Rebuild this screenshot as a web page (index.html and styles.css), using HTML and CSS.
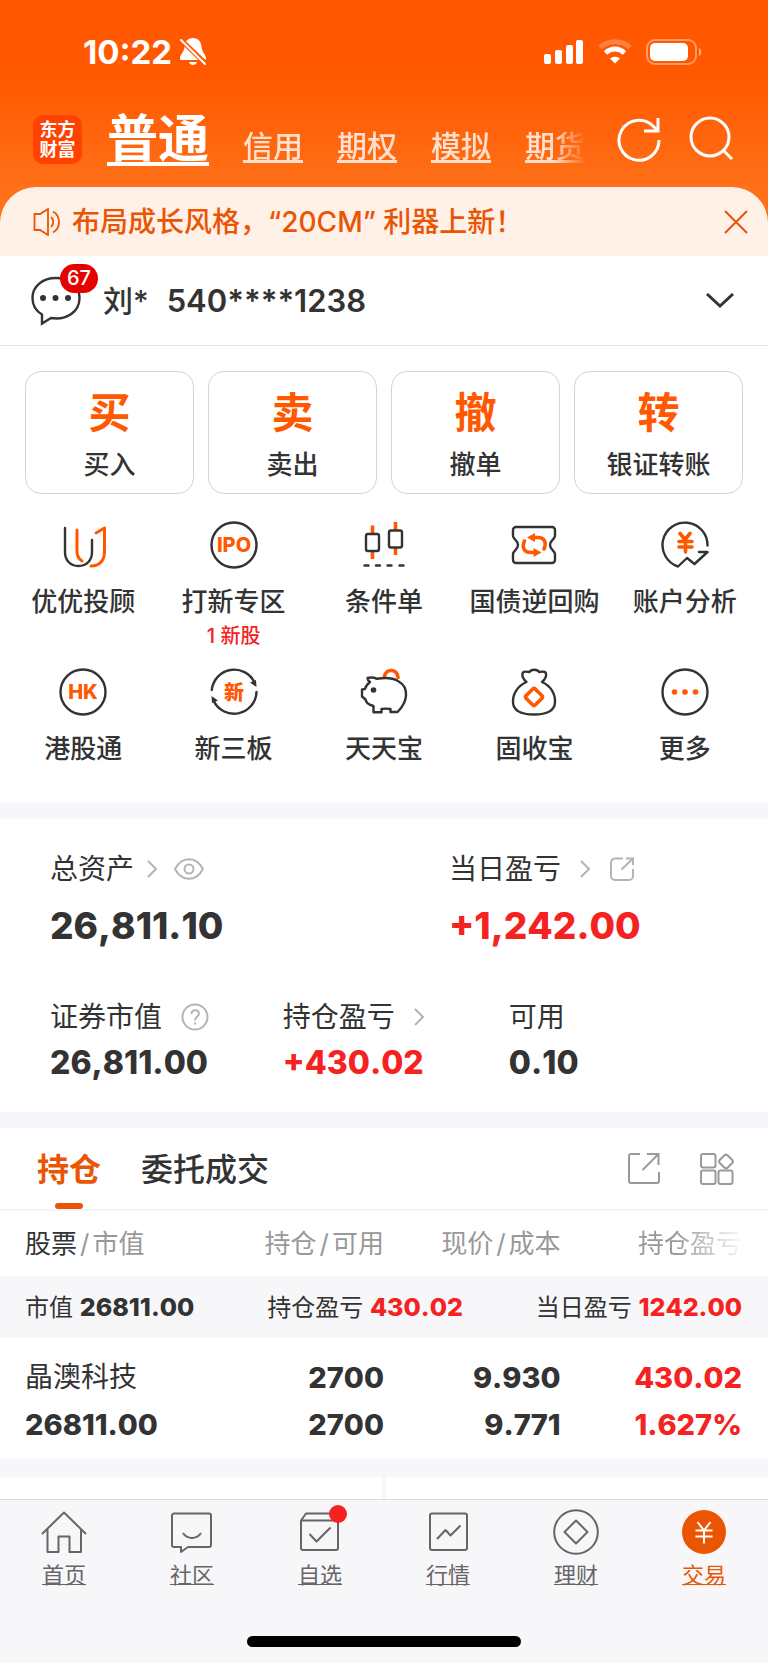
FILE: index.html
```html
<!DOCTYPE html>
<html lang="zh-CN">
<head>
  <meta charset="UTF-8">
  <meta name="viewport" content="width=device-width, initial-scale=1.0">
  <title>交易</title>
  <link rel="stylesheet" href="styles.css">
</head>
<body>

  <header class="top">
    <div class="status">
      <span class="time">10:22</span>
      <svg class="bell" width="28" height="28" viewBox="0 0 28 28">
        <path fill="#fff" d="M14 0c5.500 0 8 4 8.500 8.500C23 15 27 16 27 20.500c0 1-.6 1.500-1.500 1.500H2.500C1.600 22 1 21.500 1 20.500 1 16 5 15 5.500 8.500 6 4 8.500 0 14 0zM10 24h8c-.5 2-2 3-4 3s-3.500-1-4-3z"/>
        <path stroke="#ff5800" stroke-width="5" d="M1 1l26 25"/>
        <path stroke="#fff" stroke-width="2" stroke-linecap="round" d="M2 2l24 24"/>
      </svg>
      <div class="signals">
        <svg width="40" height="26" viewBox="0 0 40 26" fill="#fff">
          <rect x="0" y="15" width="7" height="10" rx="2"/>
          <rect x="11" y="11" width="7" height="14" rx="2"/>
          <rect x="22" y="6" width="7" height="19" rx="2"/>
          <rect x="32" y="1" width="7" height="24" rx="2"/>
        </svg>
        <svg width="34" height="26" viewBox="0 0 34 26" fill="none">
          <path stroke="#fff" stroke-opacity=".25" stroke-width="5" d="M2 8.500C10 .8 24 .8 32 8.500"/>
          <path stroke="#fff" stroke-width="5" d="M7.500 14C13 8.800 21 8.800 26.500 14"/>
          <path fill="#fff" d="M17 24.500l-5-5c3-2.500 7-2.500 10 0z"/>
        </svg>
        <svg width="56" height="26" viewBox="0 0 56 26">
          <rect x="1" y="1" width="49" height="24" rx="8" fill="none" stroke="#fff" stroke-opacity=".4" stroke-width="2"/>
          <rect x="4" y="4" width="38" height="18" rx="5" fill="#fff"/>
          <path fill="#fff" fill-opacity=".5" d="M53 9c3 1 3 7 0 8z"/>
        </svg>
      </div>
    </div>

    <div class="nav">
      <div class="logo">东方<br>财富</div>
      <nav class="markets">
        <a class="current" href="#">普通</a>
        <a href="#">信用</a>
        <a href="#">期权</a>
        <a href="#">模拟</a>
        <a href="#">期货</a>
      </nav>
      <button class="icon-btn" aria-label="刷新">
        <svg width="44" height="46" viewBox="0 0 44 46" fill="none" stroke="#fff" stroke-width="3">
          <path d="M42 24a20 20 0 1 1-6-14l5 5M41 2v13H27"/>
        </svg>
      </button>
      <button class="icon-btn search" aria-label="搜索">
        <svg width="44" height="46" viewBox="0 0 44 46" fill="none" stroke="#fff" stroke-width="3">
          <circle cx="21" cy="21" r="19"/>
          <path d="M34 34l9 9"/>
        </svg>
      </button>
    </div>
  </header>

  <div class="notice-wrap">
    <div class="notice">
      <svg width="27" height="28" viewBox="0 0 27 28" fill="none" stroke="#ea5504" stroke-width="1.800">
        <path d="M1.500 6H7l8-5v26l-8-5H1.500zM18 9c3 2.500 3 7.500 0 10M20 3.500c8 4.500 8 16.500 0 21"/>
      </svg>
      <span>布局成长风格，“20CM” 利器上新！</span>
      <button class="icon-btn close" aria-label="关闭">
        <svg width="24" height="24" viewBox="0 0 24 24" stroke="#ea5504" stroke-width="2"><path d="M1 1l22 22M23 1L1 23"/></svg>
      </button>
    </div>
  </div>

  <div class="account">
    <div class="msg">
      <svg width="50" height="50" viewBox="0 0 50 50" fill="none" stroke="#333" stroke-width="2.400">
        <path d="M25 2C11.500 2 1.500 10.500 1.500 22c0 8 3.500 13 9.500 16.500v9l9-5.500c16 2.500 28.500-6.500 28.500-20C48.500 10.500 38.500 2 25 2z"/>
        <g fill="#333" stroke="none"><circle cx="12" cy="22" r="3"/><circle cx="24.500" cy="22" r="3"/><circle cx="37" cy="22" r="3"/></g>
      </svg>
      <span class="badge">67</span>
    </div>
    <span class="owner">刘*</span>
    <span class="number">540****1238</span>
    <button class="icon-btn expand" aria-label="切换账户">
      <svg width="28" height="16" viewBox="0 0 28 16" fill="none" stroke="#333" stroke-width="3"><path d="M1 1l13 12L27 1"/></svg>
    </button>
  </div>

  <div class="actions">
    <button><b>买</b><span>买入</span></button>
    <button><b>卖</b><span>卖出</span></button>
    <button><b>撤</b><span>撤单</span></button>
    <button><b>转</b><span>银证转账</span></button>
  </div>

  <div class="tools">
    <button>
      <svg width="48" height="48" viewBox="0 0 48 48">
        <path class="ink" d="M6 7V31C6 39 11 45 19.500 45S33 39 33 31V19"/>
        <path class="hot thin" d="M18 9V31C18 36 20 38 23 40M37 12L45.500 7V31C45.500 40 40 45 32 45"/>
      </svg>
      <span>优优投顾</span>
    </button>
    <button>
      <svg width="48" height="48" viewBox="0 0 48 48">
        <circle class="ink" cx="24" cy="24" r="22.500"/>
        <text class="word" x="24" y="31">IPO</text>
      </svg>
      <span>打新专区</span>
      <small>1 新股</small>
    </button>
    <button>
      <svg width="48" height="48" viewBox="0 0 48 48">
        <path class="hot flat" d="M12.500 4.500V12M12.500 30v8M35.500 1v8M35.500 26v8"/>
        <rect class="ink" x="6" y="13" width="13" height="17" rx="2"/>
        <rect class="ink" x="29" y="9.500" width="13" height="17" rx="2"/>
        <path class="ink" d="M4.500 44.500h4M16 44.500h4M27.500 44.500h4M39.500 44.500h4"/>
      </svg>
      <span>条件单</span>
    </button>
    <button>
      <svg width="48" height="48" viewBox="0 0 48 48">
        <path class="ink" d="M6 6H42a3 3 0 0 1 3 3v6c0 3-5 4-5 9s5 6 5 9v6a3 3 0 0 1-3 3H6a3 3 0 0 1-3-3v-6c0-3 5-4 5-9s-5-6-5-9V9a3 3 0 0 1 3-3z"/>
        <path class="hot" d="M34 28C37 21 34 16.500 28 16.500H24M14.500 20C11.500 27 14.500 31.500 20.500 31.500H25"/>
        <path fill="#ff5800" d="M17 16.500l8-4.500v9zM31.500 31.500l-8-4.500v9z"/>
      </svg>
      <span>国债逆回购</span>
    </button>
    <button>
      <svg width="48" height="48" viewBox="0 0 48 48">
        <path class="ink" d="M46.500 24.500A22.500 22.500 0 1 0 17 45.500L26 37l7.500 6L46.500 31H38"/>
        <path class="hot" d="M19 12.500l5 6 5-6M18 20.500h13M18 26h13M24.500 19v12"/>
      </svg>
      <span>账户分析</span>
    </button>
    <button>
      <svg width="48" height="48" viewBox="0 0 48 48">
        <circle class="ink" cx="24" cy="24" r="22.500"/>
        <text class="word" x="24" y="31">HK</text>
      </svg>
      <span>港股通</span>
    </button>
    <button>
      <svg width="48" height="48" viewBox="0 0 48 48">
        <path class="ink" d="M1.800 22A22.500 22.500 0 0 1 44.500 14.500M46.500 24A22.500 22.500 0 0 1 3.500 32.500"/>
        <path fill="#333" d="M40 14.500l6-2.500.5 7zM8 32.500L2 35 1.500 28z"/>
        <text class="word" x="24" y="32">新</text>
      </svg>
      <span>新三板</span>
    </button>
    <button>
      <svg width="48" height="48" viewBox="0 0 48 48">
        <path class="hot" d="M24.500 8C27 0 37 1 38 9.500"/>
        <path class="ink" d="M7.500 10C11 9.200 14 9.500 17 10.800 24 9.500 33 10 38 13c5 2.800 8.500 8 8 14.500-.3 6-4 12-8.500 16.500h-7v-3c-3-.5-6-.5-9 0v3.300h-8V38C9 37 6 35 5.500 31.500L2 28.500V21.500L5 21c.7-3 2.500-5 5-7-1.500-1-2.500-2-2.500-4z"/>
        <circle fill="#333" cx="13.500" cy="22" r="2.800"/>
      </svg>
      <span>天天宝</span>
    </button>
    <button>
      <svg width="48" height="48" viewBox="0 0 48 48">
        <path class="ink" d="M16.500 14C13.500 11.500 12 8.500 12.500 5.500 13 3 17 3.500 19.500 4c1.500-3 8-3 9.500 0 2.500-.5 6.500-1 7 1.500.5 3-1 6-4 8.500 9 4 13.500 12 13 20.500C44.500 43 37 46.500 24 46.500S3.500 43 3 34.500C2.500 26 7.500 18 16.500 14z"/>
        <rect class="hot" x="17.500" y="22.500" width="13" height="13" rx="2" transform="rotate(45 24 29)"/>
      </svg>
      <span>固收宝</span>
    </button>
    <button>
      <svg width="48" height="48" viewBox="0 0 48 48">
        <circle class="ink" cx="24" cy="24" r="22.500"/>
        <g fill="#ff5800"><circle cx="13.500" cy="24" r="2.800"/><circle cx="24" cy="24" r="2.800"/><circle cx="34.500" cy="24" r="2.800"/></g>
      </svg>
      <span>更多</span>
    </button>
  </div>

  <section class="assets block">
    <div class="two">
      <div>
        <h3>总资产
          <svg class="arrow" width="10" height="18" viewBox="0 0 10 18"><path d="M1 1l8 8-8 8"/></svg>
          <svg class="eye" width="30" height="22" viewBox="0 0 30 22"><path d="M1 11C8-2 22-2 29 11 22 24 8 24 1 11z"/><circle cx="15" cy="11" r="4.500"/></svg>
        </h3>
        <p class="big">26,811.10</p>
      </div>
      <div>
        <h3>当日盈亏
          <svg class="arrow after4" width="10" height="18" viewBox="0 0 10 18"><path d="M1 1l8 8-8 8"/></svg>
          <svg class="share" width="24" height="24" viewBox="0 0 24 24"><path d="M13 1.500H5a4 4 0 0 0-4 4V19a4 4 0 0 0 4 4H19a4 4 0 0 0 4-4V12M16 1.500h7V8M22.500 2L11.500 12.500"/></svg>
        </h3>
        <p class="big red">+1,242.00</p>
      </div>
    </div>
    <div class="three">
      <div>
        <h3>证券市值
          <svg class="help" width="28" height="28" viewBox="0 0 28 28"><circle cx="14" cy="14" r="12.500"/><path d="M10.500 11c0-5 7.500-5 7.500-.5 0 3-4 3.500-4 7M14 19.500v2"/></svg>
        </h3>
        <p>26,811.00</p>
      </div>
      <div>
        <h3>持仓盈亏
          <svg class="arrow after4" width="10" height="18" viewBox="0 0 10 18"><path d="M1 1l8 8-8 8"/></svg>
        </h3>
        <p class="red">+430.02</p>
      </div>
      <div>
        <h3>可用</h3>
        <p>0.10</p>
      </div>
    </div>
  </section>

  <section class="holdings block">
    <div class="tabs">
      <button class="on">持仓</button>
      <button>委托成交</button>
      <div class="tab-icons">
        <svg width="34" height="34" viewBox="0 0 34 34"><path d="M13 2H4a2 2 0 0 0-2 2V29a2 2 0 0 0 2 2H30a2 2 0 0 0 2-2V20M20 2H31.500V13M31 2.500L15.500 18"/></svg>
        <svg width="34" height="34" viewBox="0 0 34 34"><rect x="1" y="2" width="14.500" height="13.500" rx="2"/><rect x="1" y="18.500" width="14.500" height="13.500" rx="2"/><rect x="18.500" y="18.500" width="14" height="13.500" rx="2"/><rect x="20.500" y="4" width="11" height="11" rx="2.500" transform="rotate(45 26 9.500)"/></svg>
      </div>
    </div>

    <table>
      <thead>
        <tr>
          <th><span class="dark">股票</span><span class="slash">/</span>市值</th>
          <th>持仓<span class="slash">/</span>可用</th>
          <th>现价<span class="slash">/</span>成本</th>
          <th class="fade">持仓盈亏</th>
        </tr>
      </thead>
      <tbody>
        <tr class="sum">
          <td colspan="4">
            <div>
              <span>市值 <b>26811.00</b></span>
              <span>持仓盈亏 <b class="red">430.02</b></span>
              <span>当日盈亏 <b class="red">1242.00</b></span>
            </div>
          </td>
        </tr>
        <tr class="stock">
          <td><span class="name">晶澳科技</span><br>26811.00</td>
          <td>2700<br>2700</td>
          <td>9.930<br>9.771</td>
          <td class="red">430.02<br>1.627%</td>
        </tr>
      </tbody>
    </table>
  </section>

  <div class="peek"><div></div><div></div></div>

  <footer class="tabbar">
    <nav>
      <a href="#">
        <svg width="48" height="48" viewBox="0 0 48 48"><path d="M2 26L24 4.500 46 26M7.500 21V44H18.500V28.500H29.500V44H41V21"/></svg>
        首页
      </a>
      <a href="#">
        <svg width="48" height="48" viewBox="0 0 48 48"><path d="M6 5.500H41a2 2 0 0 1 2 2V37a2 2 0 0 1-2 2H20l-7 5V39H6a2 2 0 0 1-2-2V7.500a2 2 0 0 1 2-2zM15 25c4 6.500 14 6.500 18 0"/></svg>
        社区
      </a>
      <a href="#">
        <svg width="48" height="48" viewBox="0 0 48 48"><path d="M5 12.500V40a2 2 0 0 0 2 2H40a2 2 0 0 0 2-2V12.500H5l5-7H40M13.500 26l7 7.500L34.500 19.500"/></svg>
        <i class="dot"></i>
        自选
      </a>
      <a href="#">
        <svg width="48" height="48" viewBox="0 0 48 48"><rect x="6" y="5.500" width="37" height="36.500" rx="2"/><path d="M13 31l8.500-9 5 5.500L36.500 17.500"/></svg>
        行情
      </a>
      <a href="#">
        <svg width="48" height="48" viewBox="0 0 48 48"><circle cx="24" cy="24" r="21.800"/><path d="M24 12.500L35.500 24 24 35.500 12.500 24z"/></svg>
        理财
      </a>
      <a class="on" href="#">
        <svg width="48" height="48" viewBox="0 0 48 48"><circle fill="#ea5504" stroke="none" cx="24" cy="24" r="22"/><path stroke="#fff" d="M17.500 14l6.500 8.500L30.500 14M15.500 22.500h17M15.500 28.500h17M24 22v13.500"/></svg>
        交易
      </a>
    </nav>
    <div class="home-bar"></div>
  </footer>

</body>
</html>
```

FILE: styles.css
```css
* { box-sizing: border-box; }
body { margin: 0; background: #fff; color: #333; font-family: Inter, "Noto Sans CJK SC", sans-serif; font-kerning: none; font-size: 28px; line-height: 36px; }
button { border: 0; padding: 0; background: none; color: inherit; font: inherit; }
svg { display: block; flex: none; }
h3, p { margin: 0; }
.red { color: #f52222; }

/* header */
.top { background: linear-gradient(#ff5800 40%, #ff7018); color: #fff; padding-top: 33px; }
.status { display: flex; align-items: center; height: 38px; padding: 0 66px 0 83px; }
.time { font-size: 33px; font-weight: 700; }
.bell { margin-left: 7px; }
.signals { display: flex; gap: 14px; margin-left: auto; }
.nav { display: flex; align-items: center; padding: 38px 35px 18px 33px; }
.logo { width: 49px; height: 49px; padding-top: 5px; border-radius: 10px; background: #ff4200; font-size: 18px; font-weight: 700; line-height: 20px; text-align: center; }
.markets { flex: 1; min-width: 0; display: flex; align-items: baseline; gap: 34px; margin-left: 25px; overflow: hidden; white-space: nowrap; -webkit-mask-image: linear-gradient(90deg, #000 93%, transparent); mask-image: linear-gradient(90deg, #000 93%, transparent); }
.markets a { color: #ffdfce; font-size: 30px; line-height: 40px; text-decoration: underline; text-decoration-thickness: 3px; text-underline-offset: 3px; text-decoration-skip-ink: none; font-weight: 500; }
.markets .current { color: #fff; font-size: 51px; font-weight: 700; line-height: 60px; text-decoration-thickness: 4px; text-underline-offset: 5px; }
.icon-btn { flex: none; margin-left: 31px; }
.search { margin-left: 28px; }

/* notice */
.notice-wrap { background: #ff7018; }
.notice { display: flex; align-items: center; gap: 12px; padding: 17px 20px 16px 33px; border-radius: 36px 36px 0 0; background: #fff0e8; color: #ea5504; font-weight: 500; }
.close { margin-left: auto; }

/* account */
.account { display: flex; align-items: center; padding: 20px 34px 19px 31px; border-bottom: 1px solid #e6e6e6; }
.msg { position: relative; }
.badge { position: absolute; left: 29px; top: -12px; padding: 0 7px; border-radius: 15px; background: #e80000; color: #fff; font-size: 20px; font-weight: 500; line-height: 29px; }
.owner { margin-left: 22px; font-size: 30px; font-weight: 500; }
.number { margin-left: 18px; font-size: 31px; font-weight: 600; }
.expand { margin-left: auto; }

/* buy / sell */
.actions { display: grid; grid-template-columns: repeat(4, 1fr); gap: 14px; padding: 25px 25px 27px; }
.actions button { display: flex; flex-direction: column; align-items: center; gap: 8px; padding: 15px 0 10px; border: 1px solid #d4d4d4; border-radius: 16px; font-size: 26px; font-weight: 500; }
.actions b { color: #ff5800; font-size: 42px; line-height: 52px; }

/* tool grid */
.tools { display: grid; grid-template-columns: repeat(5, 1fr); row-gap: 16px; padding: 0 8px 36px; }
.tools button { display: flex; flex-direction: column; align-items: center; justify-content: flex-start; font-size: 26px; font-weight: 500; white-space: nowrap; }
.tools span { margin-top: 15px; }
.tools small { color: #f52222; font-size: 20px; line-height: 32px; }
.ink, .hot { fill: none; stroke: #333; stroke-width: 2.400; stroke-linecap: round; stroke-linejoin: round; }
.hot { stroke: #ff5800; stroke-width: 3.600; }
.thin { stroke-width: 3; }
.flat { stroke-linecap: butt; }
.word { fill: #ff5800; font-size: 20px; font-weight: 800; text-anchor: middle; }

.block { border-top: 16px solid #f6f7fa; }

/* assets */
.assets { padding: 32px 53px 29px 50px; }
.two { display: grid; grid-template-columns: 60% 40%; }
.three { display: grid; grid-template-columns: 35% 34% 31%; margin-top: 49px; }
.assets h3 { display: flex; align-items: center; font-size: 28px; font-weight: 400; }
.assets svg { fill: none; stroke: #b4b4b4; stroke-width: 2; }
.assets p { margin-top: 8px; font-size: 32px; font-weight: 800; line-height: 40px; }
.assets .big { margin-top: 15px; font-size: 37px; line-height: 48px; }
.arrow { margin-left: 13px; }
.assets .after4 { margin-left: 19px; }
.eye { margin-left: 17px; }
.share { margin-left: 20px; }
.help { margin-left: 19px; }

/* holdings */
.tabs { display: flex; align-items: stretch; padding: 0 34px 0 37px; border-bottom: 2px solid #f4f4f6; }
.tabs button { position: relative; margin-right: 40px; padding: 22px 0 19px; font-size: 32px; font-weight: 500; line-height: 40px; }
.tabs .on { color: #ea5504; font-weight: 700; }
.tabs .on::after { content: ""; position: absolute; left: 50%; bottom: 0; width: 28px; height: 6px; margin-left: -14px; border-radius: 3px; background: #ea5504; }
.tab-icons { display: flex; align-items: center; gap: 39px; margin-left: auto; }
.tab-icons svg { fill: none; stroke: #999; stroke-width: 2; }
table { width: 100%; border-collapse: collapse; table-layout: fixed; }
th, td { padding: 0; text-align: right; }
th { padding: 15px 0 14px; color: #999; font-size: 26px; font-weight: 400; white-space: nowrap; }
th:nth-child(1) { width: 26%; }
th:nth-child(2) { width: 24%; }
th:nth-child(3) { width: 23%; }
th:first-child, td:first-child { padding-left: 25px; text-align: left; }
th:last-child, td:last-child { padding-right: 26px; }
.dark { color: #333; }
.slash { margin: 0 3px; }
.fade { -webkit-mask-image: linear-gradient(90deg, #000 55%, transparent 90%); mask-image: linear-gradient(90deg, #000 55%, transparent 90%); }
.sum { background: #f7f7fa; font-size: 24px; }
.sum div { display: flex; justify-content: space-between; padding: 13px 0 12px; }
.sum b, .stock td { font-weight: 800; }
.sum b { font-size: 25px; }
.stock td { padding-top: 15px; padding-bottom: 11px; font-size: 29px; line-height: 47px; }
.stock .name { font-size: 28px; font-weight: 400; }

/* top edge of the next cards */
.peek { display: grid; grid-template-columns: 1fr 1fr; gap: 4px; padding-top: 18px; background: #f6f7fa; }
.peek div { height: 22px; background: #fff; }

/* bottom bar */
.tabbar { padding-bottom: 16px; border-top: 1px solid #d9dae2; background: #f7f7fa; }
.tabbar nav { display: grid; grid-template-columns: repeat(6, 1fr); padding: 8px 0 46px; }
.tabbar a { position: relative; display: flex; flex-direction: column; align-items: center; gap: 4px; color: #666; font-size: 22px; line-height: 30px; text-decoration: underline; text-decoration-thickness: 1px; text-underline-offset: 1px; text-decoration-skip-ink: none; }
.tabbar a.on { color: #ea5504; }
.tabbar svg { fill: none; stroke: #666; stroke-width: 2; stroke-linejoin: round; }
.dot { position: absolute; left: 50%; top: -3px; width: 18px; height: 18px; margin-left: 9px; border-radius: 50%; background: #f52222; }
.home-bar { width: 274px; height: 11px; margin: 0 auto; border-radius: 6px; background: #000; }
```
